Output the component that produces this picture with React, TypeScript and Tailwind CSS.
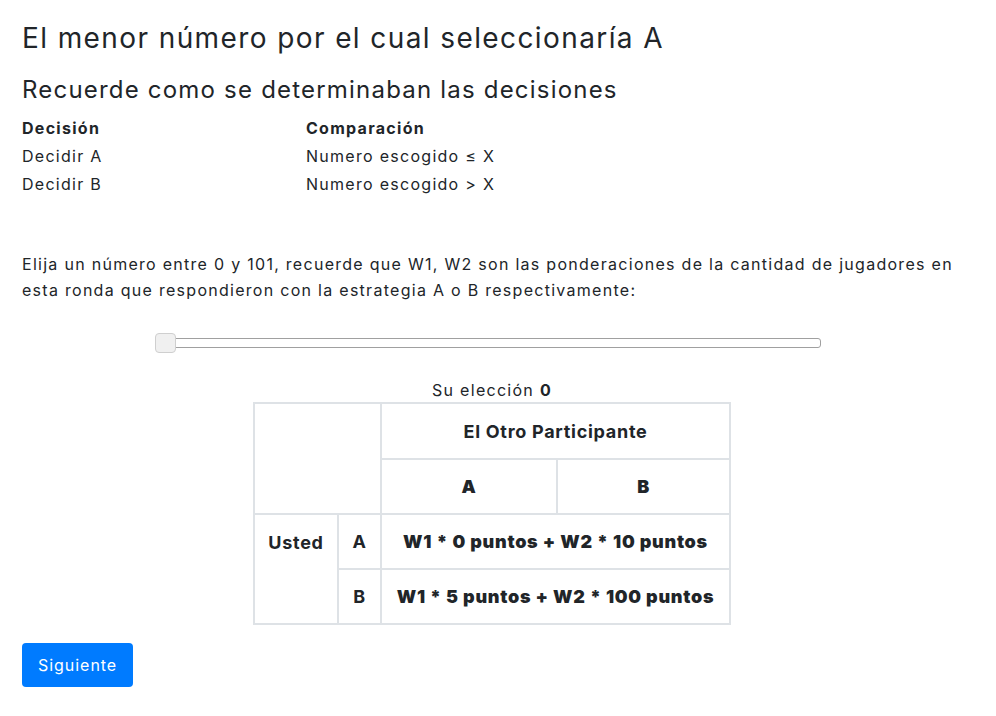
import React from 'react';

const font = { fontFamily: 'Inter, "Noto Sans", sans-serif' };
const cell = 'border-2 border-[#dee2e6]';

export default function App() {
  return (
    <div className="min-h-screen bg-white text-[#212529] px-[22px] pt-[18px] tracking-[0.08em]" style={font}>
      <h3 className="text-[28px] leading-[40px] font-normal tracking-[0.05em]">El menor número por el cual seleccionaría A</h3>
      <h4 className="mt-[17px] text-[24px] leading-[30px] font-normal tracking-[0.05em]">Recuerde como se determinaban las decisiones</h4>

      {/* Decision rules */}
      <div className="mt-[9px] text-base leading-[28px]">
        <div className="flex font-bold">
          <div className="w-[284px]">Decisión</div>
          <div>Comparación</div>
        </div>
        <div className="flex">
          <div className="w-[284px]">Decidir A</div>
          <div>Numero escogido ≤ X</div>
        </div>
        <div className="flex">
          <div className="w-[284px]">Decidir B</div>
          <div>Numero escogido &gt; X</div>
        </div>
      </div>

      <p className="mt-[53px] text-base leading-[26px]">
        Elija un número entre 0 y 101, recuerde que W1, W2 son las ponderaciones de la cantidad de jugadores en
        esta ronda que respondieron con la estrategia A o B respectivamente:
      </p>

      {/* Slider */}
      <div className="mt-[30px] flex justify-center pr-[20px]">
        <div className="relative w-[666px] h-[20px] flex items-center">
          <div className="w-full h-[10px] rounded-[3px] border border-[#a0a0a0] bg-white" />
          <div className="absolute left-0 top-0 w-[21px] h-[20px] rounded-[4px] border border-[#cfcfcf] bg-[#f0f0f0]" />
        </div>
      </div>

      <div className="mt-[25px] text-center text-base leading-[24px] pr-[12px]">
        Su elección <span className="font-bold">0</span>
      </div>

      {/* Payoff table */}
      <div className="flex justify-center pr-[12px]">
        <table className="border-collapse text-[18px] font-black text-center tracking-[0.04em]">
          <tbody>
            <tr className="h-[56px]">
              <td colSpan={2} rowSpan={2} className={cell} />
              <td colSpan={2} className={`${cell} font-bold`}>El Otro Participante</td>
            </tr>
            <tr className="h-[55px]">
              <td className={`w-[176px] ${cell}`}>A</td>
              <td className={`w-[173px] ${cell}`}>B</td>
            </tr>
            <tr className="h-[55px]">
              <td rowSpan={2} className={`w-[84px] ${cell} font-bold align-top pt-[14px]`}>Usted</td>
              <td className={`w-[43px] ${cell} font-bold`}>A</td>
              <td colSpan={2} className={`${cell} px-1`}>W1 * 0 puntos + W2 * 10 puntos</td>
            </tr>
            <tr className="h-[55px]">
              <td className={`${cell} font-bold`}>B</td>
              <td colSpan={2} className={`${cell} px-1`}>W1 * 5 puntos + W2 * 100 puntos</td>
            </tr>
          </tbody>
        </table>
      </div>

      <button className="mt-[18px] h-[44px] px-[16px] rounded-[4px] bg-[#007bff] text-white text-base tracking-[0.06em]">
        Siguiente
      </button>
    </div>
  );
}
